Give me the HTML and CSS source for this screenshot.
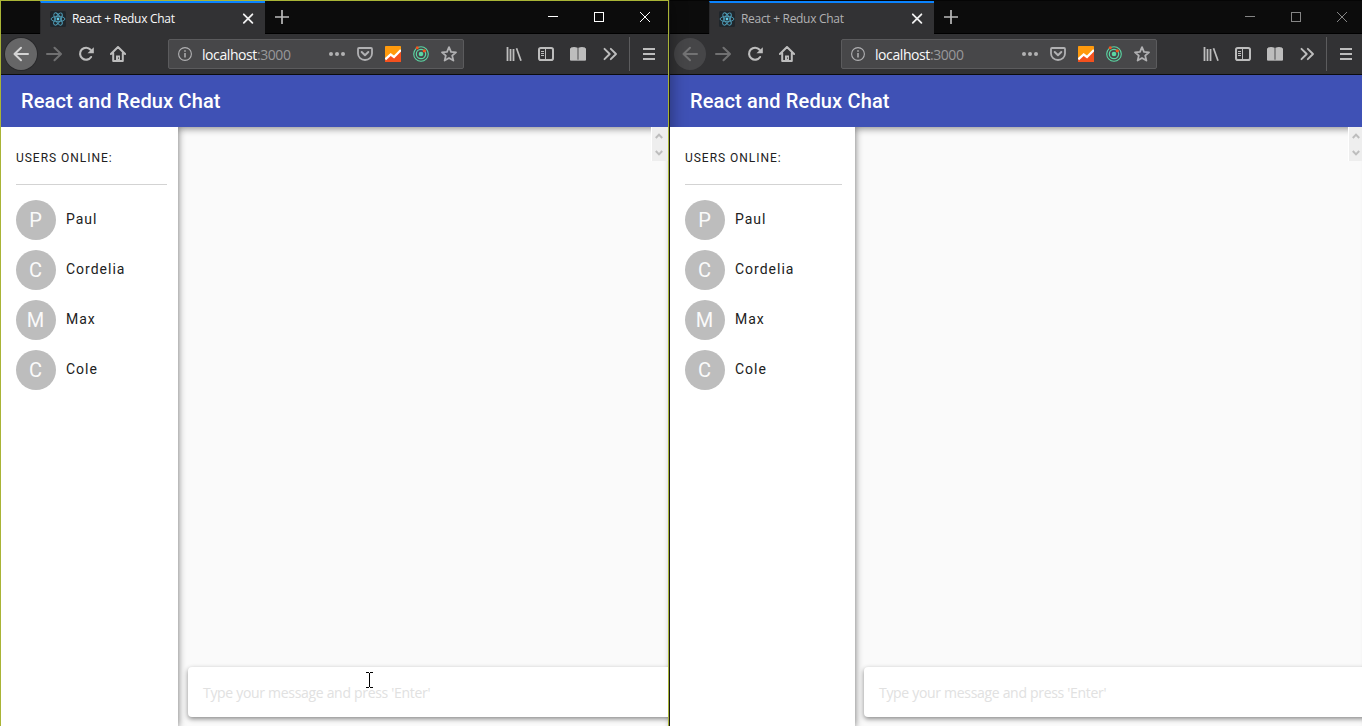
FILE: index.html
```html
<!DOCTYPE html>
<html lang="en">
<head>
<meta charset="utf-8">
<title>React + Redux Chat</title>
<link rel="stylesheet" href="styles.css">
</head>
<body>
<svg class="sprite" aria-hidden="true">
  <symbol id="react" viewBox="0 0 16 16"><rect width="16" height="16" rx="1.5" fill="#20262b"/><g fill="none" stroke="#4f9fba" stroke-width=".9"><ellipse cx="8" cy="8" rx="6.9" ry="2.7"/><ellipse cx="8" cy="8" rx="6.9" ry="2.7" transform="rotate(60 8 8)"/><ellipse cx="8" cy="8" rx="6.9" ry="2.7" transform="rotate(120 8 8)"/></g><circle cx="8" cy="8" r="1.4" fill="#61cbe8"/></symbol>
  <symbol id="cross" viewBox="0 0 16 16"><path d="M3.8 3.3l8.6 8.6m0-8.6l-8.6 8.6" fill="none" stroke="currentColor" stroke-width="1.8" stroke-linecap="round"/></symbol>
  <symbol id="plus" viewBox="0 0 16 16"><path d="M8 1v14M1 8h14" fill="none" stroke="currentColor" stroke-width="1.7"/></symbol>
  <symbol id="back" viewBox="0 0 16 16"><path d="M15 8H1.5M8 1.7L1.5 8 8 14.3" fill="none" stroke="currentColor" stroke-width="2" stroke-linecap="round" stroke-linejoin="round"/></symbol>
  <symbol id="forward" viewBox="0 0 16 16"><path d="M1 8h13.5M8.5 1.7L15 8l-6.5 6.3" fill="none" stroke="currentColor" stroke-width="2" stroke-linecap="round" stroke-linejoin="round"/></symbol>
  <symbol id="reload" viewBox="0 0 16 16"><path d="M12.6 3.8A6 6 0 1 0 13.1 11" fill="none" stroke="currentColor" stroke-width="2.1" stroke-linecap="round"/><path d="M15.8 1.2v6.1H9.5z" fill="currentColor"/></symbol>
  <symbol id="home" viewBox="0 0 16 16"><path d="M.9 8L8 1l7.1 7M3.2 7v8h9.6V7" fill="none" stroke="currentColor" stroke-width="2" stroke-linecap="round" stroke-linejoin="round"/><path d="M6 15V9.5h4V15z" fill="currentColor"/><path d="M8.5 11.5v1.2" stroke="#323234" stroke-width="1"/></symbol>
  <symbol id="info" viewBox="0 0 16 16"><circle cx="8" cy="8" r="6.4" fill="none" stroke="currentColor" stroke-width="1.1"/><path d="M8 7v4.5M8 4.2v1.6" stroke="currentColor" stroke-width="1.5"/></symbol>
  <symbol id="dots" viewBox="0 0 16 16"><g fill="currentColor"><circle cx="2" cy="8" r="2"/><circle cx="8" cy="8" r="2"/><circle cx="14" cy="8" r="2"/></g></symbol>
  <symbol id="pocket" viewBox="0 0 16 16"><path d="M2 2h12a1 1 0 0 1 1 1v4.5a7 6.5 0 0 1-14 0V3a1 1 0 0 1 1-1z" fill="none" stroke="currentColor" stroke-width="1.8"/><path d="M4.7 6L8 9.2 11.3 6" fill="none" stroke="currentColor" stroke-width="2" stroke-linecap="round" stroke-linejoin="round"/></symbol>
  <symbol id="chart" viewBox="0 0 16 16"><rect width="16" height="16" rx=".7" fill="#ff9a0d"/><path d="M0 13.5l5.5-5 3.5 2.8L16 4v12H0z" fill="#f4511e"/><path d="M.3 13.4l5.4-4.9 3.3 2.5L15.9 4" fill="none" stroke="#fff" stroke-width="2.3"/></symbol>
  <symbol id="radar" viewBox="0 0 16 16"><g fill="none" stroke="#5bd6a3"><circle cx="8" cy="8" r="7.3" stroke-width="1.1"/><circle cx="8" cy="8" r="4.7" stroke-width="1.2"/></g><circle cx="8" cy="8" r="2.3" fill="#5bd6a3"/><circle cx="4.2" cy="1.7" r="1.5" fill="#f4551e"/><circle cx="11.3" cy="4.8" r="1.6" fill="#f4551e"/></symbol>
  <symbol id="star" viewBox="0 0 16 16"><path d="M8 1.2l2 4.6 5 .5-3.8 3.3 1.2 5L8 12l-4.4 2.6 1.2-5L1 6.3l5-.5z" fill="none" stroke="currentColor" stroke-width="1.8" stroke-linejoin="round"/></symbol>
  <symbol id="library" viewBox="0 0 16 16"><path d="M1.5 1v14M4.5 3v12M7.5 3v12" stroke="currentColor" stroke-width="1.8"/><path d="M10.5 2.2L15 14.8" stroke="currentColor" stroke-width="1.7"/></symbol>
  <symbol id="panel" viewBox="0 0 16 16"><rect x="1" y="2" width="14" height="12" rx="1.8" fill="none" stroke="currentColor" stroke-width="2"/><path d="M7.5 2v12" stroke="currentColor" stroke-width="1"/><path d="M3 5.5h3M3 7.5h3M3 9.5h3" stroke="currentColor" stroke-width="1"/></symbol>
  <symbol id="reader" viewBox="0 0 16 16"><path d="M0 2.3h1V14H0zM15 2.3h1V14h-1z" fill="currentColor"/><path d="M1 1.5c2.200-.7 4.400-.7 6.600.3v12.200H1zM15 1.500c-2.200-.7-4.400-.7-6.600.3v12.200H15z" fill="currentColor"/><path d="M.3 14.200h15.400" stroke="currentColor"/></symbol>
  <symbol id="chevrons" viewBox="0 0 16 16"><path d="M2.500 2.800L7.700 8l-5.200 5.200M8.800 2.800L14 8l-5.200 5.200" fill="none" stroke="currentColor" stroke-width="1.900" stroke-linecap="round" stroke-linejoin="round"/></symbol>
  <symbol id="menu" viewBox="0 0 16 16"><path d="M2 3h12M2 8h12M2 13h12" stroke="currentColor" stroke-width="2"/></symbol>
  <symbol id="minimize" viewBox="0 0 12 12"><path d="M1 5.5h10" stroke="currentColor"/></symbol>
  <symbol id="maximize" viewBox="0 0 12 12"><rect x="1.5" y="1.5" width="9" height="9" fill="none" stroke="currentColor"/></symbol>
  <symbol id="quit" viewBox="0 0 12 12"><path d="M1 1l10 10M11 1L1 11" stroke="currentColor"/></symbol>
  <symbol id="up" viewBox="0 0 8 6"><path d="M.8 5L4 1.600 7.200 5" fill="none" stroke="currentColor" stroke-width="2"/></symbol>
  <symbol id="down" viewBox="0 0 8 6"><path d="M.8 1L4 4.400 7.200 1" fill="none" stroke="currentColor" stroke-width="2"/></symbol>
</svg>

<main class="desktop">
  <section class="window active">
    <div class="titlebar">
      <div class="tab"><svg class="icon"><use href="#react"/></svg><span class="tab-title">React + Redux Chat</span><svg class="icon tab-close"><use href="#cross"/></svg></div>
      <svg class="icon new-tab"><use href="#plus"/></svg>
      <div class="controls"><span><svg><use href="#minimize"/></svg></span><span><svg><use href="#maximize"/></svg></span><span><svg><use href="#quit"/></svg></span></div>
    </div>
    <div class="toolbar">
      <span class="back"><svg class="icon"><use href="#back"/></svg></span>
      <div class="nav"><svg class="icon dim"><use href="#forward"/></svg><svg class="icon"><use href="#reload"/></svg><svg class="icon"><use href="#home"/></svg></div>
      <div class="urlbar"><svg class="icon"><use href="#info"/></svg><span class="url">localhost<i>:3000</i></span><svg class="icon"><use href="#dots"/></svg><svg class="icon"><use href="#pocket"/></svg><svg class="icon"><use href="#chart"/></svg><svg class="icon"><use href="#radar"/></svg><svg class="icon"><use href="#star"/></svg></div>
      <div class="tools"><svg class="icon"><use href="#library"/></svg><svg class="icon"><use href="#panel"/></svg><svg class="icon"><use href="#reader"/></svg><svg class="icon"><use href="#chevrons"/></svg></div>
      <span class="menu"><svg class="icon"><use href="#menu"/></svg></span>
    </div>
    <header class="appbar">React and Redux Chat</header>
    <div class="chat">
      <aside class="sidebar">
        <h2>USERS ONLINE:</h2>
        <ul>
          <li><b>P</b><span>Paul</span></li>
          <li><b>C</b><span>Cordelia</span></li>
          <li><b>M</b><span>Max</span></li>
          <li><b>C</b><span>Cole</span></li>
        </ul>
      </aside>
      <div class="messages">
        <div class="scroll"><svg><use href="#up"/></svg><svg><use href="#down"/></svg></div>
        <div class="composer">Type your message and press 'Enter'</div>
      </div>
    </div>
    <svg class="cursor" viewBox="0 0 7 16"><path d="M0 .5h3M4 .5h3M3.500 1v14M0 15.500h3M4 15.500h3" stroke="#000" fill="none"/></svg>
  </section>

  <section class="window inactive">
    <div class="titlebar">
      <div class="tab"><svg class="icon"><use href="#react"/></svg><span class="tab-title">React + Redux Chat</span><svg class="icon tab-close"><use href="#cross"/></svg></div>
      <svg class="icon new-tab"><use href="#plus"/></svg>
      <div class="controls"><span><svg><use href="#minimize"/></svg></span><span><svg><use href="#maximize"/></svg></span><span><svg><use href="#quit"/></svg></span></div>
    </div>
    <div class="toolbar">
      <span class="back"><svg class="icon"><use href="#back"/></svg></span>
      <div class="nav"><svg class="icon dim"><use href="#forward"/></svg><svg class="icon"><use href="#reload"/></svg><svg class="icon"><use href="#home"/></svg></div>
      <div class="urlbar"><svg class="icon"><use href="#info"/></svg><span class="url">localhost<i>:3000</i></span><svg class="icon"><use href="#dots"/></svg><svg class="icon"><use href="#pocket"/></svg><svg class="icon"><use href="#chart"/></svg><svg class="icon"><use href="#radar"/></svg><svg class="icon"><use href="#star"/></svg></div>
      <div class="tools"><svg class="icon"><use href="#library"/></svg><svg class="icon"><use href="#panel"/></svg><svg class="icon"><use href="#reader"/></svg><svg class="icon"><use href="#chevrons"/></svg></div>
      <span class="menu"><svg class="icon"><use href="#menu"/></svg></span>
    </div>
    <header class="appbar">React and Redux Chat</header>
    <div class="chat">
      <aside class="sidebar">
        <h2>USERS ONLINE:</h2>
        <ul>
          <li><b>P</b><span>Paul</span></li>
          <li><b>C</b><span>Cordelia</span></li>
          <li><b>M</b><span>Max</span></li>
          <li><b>C</b><span>Cole</span></li>
        </ul>
      </aside>
      <div class="messages">
        <div class="scroll"><svg><use href="#up"/></svg><svg><use href="#down"/></svg></div>
        <div class="composer">Type your message and press 'Enter'</div>
      </div>
    </div>
  </section>
</main>
</body>
</html>
```
FILE: styles.css
```css
* { box-sizing: border-box; }
body { margin: 0; overflow: hidden; font-family: Roboto, sans-serif; }
svg { display: block; flex: none; }
.sprite { position: absolute; width: 0; height: 0; }
.icon { width: 16px; height: 16px; }

.desktop { display: flex; width: 1362px; height: 726px; overflow: hidden; }
.window {
  position: relative;
  display: flex;
  flex-direction: column;
  flex: none;
  height: 726px;
  border: 1px solid #a9b436;
  border-bottom: 0;
}
.active { width: 669px; z-index: 1; box-shadow: 0 0 0 1px #1c1c1c, 2px 0 15px rgba(0, 0, 0, .36); }
.inactive { width: 697px; border-color: #050505; }

.titlebar {
  display: flex;
  align-items: center;
  height: 33px;
  flex: none;
  padding-left: 39px;
  background: #0c0c0c;
  border-bottom: 1px solid #000;
}
.tab {
  display: flex;
  align-items: center;
  align-self: flex-start;
  width: 225px;
  height: 33px;
  padding: 0 9px;
  background: #323234;
  border-top: 2px solid #0a84ff;
  border-left: 1px solid #29292b;
  color: #f9f9fa;
  font: 12px "Open Sans", sans-serif;
}
.tab-title { margin-left: 6px; flex: 1; white-space: nowrap; letter-spacing: -.3px; }
.tab-close { color: #f0f0f0; }
.new-tab { margin-left: 9px; color: #bbb; }
.controls { display: flex; margin-left: auto; color: #fff; }
.controls span { width: 46px; display: flex; justify-content: center; }
.controls svg { width: 12px; height: 12px; }
.inactive .tab-title { color: #b1b1b3; }
.inactive .controls { color: #858585; }

.toolbar {
  display: flex;
  align-items: center;
  height: 41px;
  flex: none;
  padding: 0 0 1px 4px;
  background: #323234;
  border-bottom: 1px solid #0c0c0d;
  color: #bdbdbd;
}
.back {
  display: flex;
  align-items: center;
  justify-content: center;
  width: 32px;
  height: 32px;
  border-radius: 50%;
  background: #666667;
  box-shadow: 0 0 0 1px #29292b;
  color: #d4d4d4;
}
.inactive .back { background: #464648; box-shadow: none; color: #737374; }
.nav { display: flex; gap: 16px; margin-left: 9px; }
.dim { color: #707071; }
.urlbar {
  display: flex;
  align-items: center;
  gap: 12px;
  flex: 1;
  height: 30px;
  margin-left: 42px;
  padding: 0 6px 0 8px;
  background: #474749;
  border: 1px solid #5b5b5d;
  border-radius: 2px;
  color: #b1b1b3;
}
.inactive .urlbar { margin-left: 46px; }
.url { flex: 1; margin-left: -3px; padding-top: 1px; font: 14px "Open Sans", sans-serif; letter-spacing: -.42px; color: #f9f9fa; }
.url i { font-style: normal; color: #98989a; }
.tools { display: flex; gap: 16px; margin-left: 42px; }
.inactive .tools { margin-left: 46px; }
.menu { display: flex; align-items: center; height: 34px; margin-left: 11px; padding: 0 11px; border-left: 1px solid #5c5c5e; }

.appbar {
  height: 52px;
  flex: none;
  padding-left: 20px;
  background: #3f51b5;
  color: #fff;
  font-size: 20px;
  font-weight: 500;
  line-height: 52px;
  letter-spacing: .15px;
}
.chat { display: flex; flex: 1; min-height: 0; }
.sidebar {
  position: relative;
  width: 177px;
  flex: none;
  padding: 0 11px 0 15px;
  background: #fff;
  box-shadow: 1px 0 7px rgba(0, 0, 0, .36);
  clip-path: inset(0 -12px 0 0);
  z-index: 1;
}
.inactive .sidebar { width: 185px; padding-right: 13px; }
.sidebar h2 {
  height: 58px;
  margin: 0 0 15px;
  border-bottom: 1px solid #d3d3d3;
  font-size: 12px;
  font-weight: 400;
  line-height: 62px;
  letter-spacing: .97px;
  color: #212121;
}
.sidebar ul { display: grid; gap: 10px; margin: 0; padding: 0; list-style: none; }
.sidebar li { display: flex; gap: 10px; height: 40px; font-size: 14px; line-height: 38px; letter-spacing: 1px; color: #212121; }
.sidebar b {
  width: 40px;
  padding-right: 1px;
  border-radius: 50%;
  background: #bdbdbd;
  color: #fafafa;
  font-size: 20px;
  font-weight: 400;
  line-height: 41px;
  letter-spacing: 0;
  text-align: center;
}
.messages {
  display: flex;
  flex-direction: column;
  flex: 1;
  overflow: hidden;
  background: #fafafa;
  box-shadow: inset 0 5px 7px -3px rgba(0, 0, 0, .42);
}
.scroll {
  display: flex;
  flex-direction: column;
  align-self: flex-end;
  align-items: center;
  justify-content: space-between;
  width: 17px;
  height: 34px;
  padding: 6px 2px 5px 0;
  background: #eee;
  border-left: 1px solid #fff;
  color: #bdbdbd;
}
.scroll svg { width: 8px; height: 6px; }
.composer {
  width: 720px;
  height: 50px;
  margin: auto 0 9px 10px;
  padding-left: 15px;
  background: #fff;
  border-radius: 4px;
  box-shadow: 0 2px 5px rgba(0, 0, 0, .45);
  color: #e1e1e1;
  font: 14px/51px "Open Sans", sans-serif;
  letter-spacing: -.31px;
  white-space: nowrap;
}
.inactive .composer { margin-left: 9px; }
.cursor { position: absolute; left: 365px; top: 671px; width: 7px; height: 16px; }
```
